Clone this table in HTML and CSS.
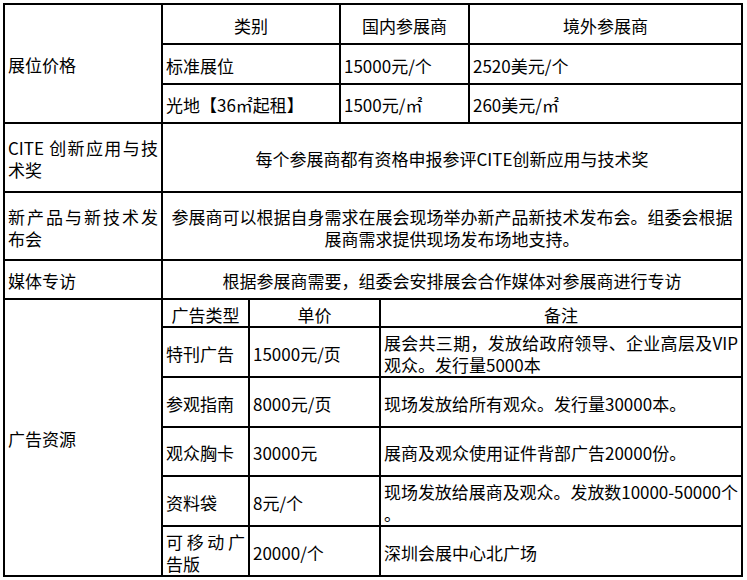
FILE: index.html
```html
<!DOCTYPE html>
<html lang="zh-CN">
<head>
<meta charset="utf-8">
<title>展位价格</title>
<link rel="stylesheet" href="styles.css">
</head>
<body>
<div class="sheet">
  <div class="c r3">展位价格</div>
  <div class="c s2 ctr">类别</div>
  <div class="c s2 ctr">国内参展商</div>
  <div class="c ctr">境外参展商</div>

  <div class="c s2">标准展位</div>
  <div class="c s2">15000元/个</div>
  <div class="c">2520美元/个</div>

  <div class="c s2">光地【36㎡起租】</div>
  <div class="c s2">1500元/㎡</div>
  <div class="c">260美元/㎡</div>

  <div class="c jus">CITE 创新应用与技术奖</div>
  <div class="c s5 ctr">每个参展商都有资格申报参评CITE创新应用与技术奖</div>

  <div class="c jus">新产品与新技术发布会</div>
  <div class="c s5 ctr">参展商可以根据自身需求在展会现场举办新产品新技术发布会。组委会根据展商需求提供现场发布场地支持。</div>

  <div class="c">媒体专访</div>
  <div class="c s5 ctr">根据参展商需要，组委会安排展会合作媒体对参展商进行专访</div>

  <div class="c r6">广告资源</div>
  <div class="c ctr">广告类型</div>
  <div class="c s2 ctr">单价</div>
  <div class="c s2 ctr">备注</div>

  <div class="c">特刊广告</div>
  <div class="c s2">15000元/页</div>
  <div class="c s2 jus">展会共三期，发放给政府领导、企业高层及VIP观众。发行量5000本</div>

  <div class="c">参观指南</div>
  <div class="c s2">8000元/页</div>
  <div class="c s2">现场发放给所有观众。发行量30000本。</div>

  <div class="c">观众胸卡</div>
  <div class="c s2">30000元</div>
  <div class="c s2">展商及观众使用证件背部广告20000份。</div>

  <div class="c">资料袋</div>
  <div class="c s2">8元/个</div>
  <div class="c s2 tight">现场发放给展商及观众。发放数10000-50000个<br>。</div>

  <div class="c jus">可移动广告版</div>
  <div class="c s2">20000/个</div>
  <div class="c s2">深圳会展中心北广场</div>
</div>
</body>
</html>
```
FILE: styles.css
```css
html, body {
  margin: 0;
  padding: 0;
  background: #fff;
}

body {
  font-family: "Noto Sans CJK SC", "Noto Sans", sans-serif;
  font-size: 17px;
  line-height: 22px;
  color: #000;
}

.sheet {
  display: grid;
  grid-template-columns: 156px 85px 89px 38px 87px 271px;
  grid-template-rows: 38px 38px 37px 67px 66px 37px 26px 48px 48px 47px 48px 48px;
  gap: 2px;
  padding: 2px;
  width: max-content;
  margin: 3px 0 0 3px;
  background: #000;
}

.c {
  background: #fff;
  display: grid;
  grid-template-columns: minmax(0, 1fr);
  align-content: center;
  padding: 3px 3px 0;
  text-align: left;
  min-width: 0;
}

.ctr { text-align: center; }
.jus { text-align: justify; }
.tight { padding-right: 0; letter-spacing: -0.05px; }

.s2 { grid-column: span 2; }
.s5 { grid-column: span 5; }
.r3 { grid-row: span 3; }
.r6 { grid-row: span 6; }
```
